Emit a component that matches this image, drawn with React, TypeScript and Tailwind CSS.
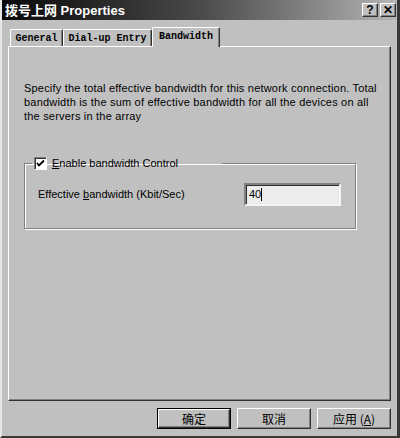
import React from "react";

const sans = "font-['Liberation_Sans','Noto_Sans_CJK_SC',sans-serif]";

function TitleBtn({ children }: { children: React.ReactNode }) {
  return (
    <div className="w-[16px] h-[14px] bg-[#c0c0c0] border-t border-l border-t-white border-l-white border-r border-b border-r-[#303030] border-b-[#303030] shadow-[inset_-1px_-1px_0_#808080] flex items-center justify-center text-black font-bold text-[12px] leading-none font-['Liberation_Sans',sans-serif]">
      {children}
    </div>
  );
}

function Tab({ label, selected, w }: { label: string; selected?: boolean; w: string }) {
  return (
    <div
      className={
        (selected
          ? "h-[20px] -mb-[1px] relative z-10 pb-[3px] "
          : "h-[17px] ") +
        w +
        " bg-[#c0c0c0] border-t border-l border-t-white border-l-white border-r border-r-[#303030] shadow-[inset_-1px_0_0_#808080] rounded-t-[2px] flex items-center justify-center text-[10px] font-bold text-black font-['Liberation_Mono',monospace] whitespace-nowrap"
      }
    >
      {label}
    </div>
  );
}

function Button({ children, def }: { children: React.ReactNode; def?: boolean }) {
  const inner =
    "h-full w-full bg-[#c0c0c0] border-t border-l border-t-white border-l-white border-r border-b border-r-[#303030] border-b-[#303030] shadow-[inset_-1px_-1px_0_#808080] flex items-center justify-center text-[12px] text-black font-['Noto_Sans_CJK_SC',sans-serif]";
  if (def) {
    return (
      <div className="w-[74px] h-[21px] border border-black">
        <div className={inner}>{children}</div>
      </div>
    );
  }
  return (
    <div className="w-[74px] h-[21px]">
      <div className={inner}>{children}</div>
    </div>
  );
}

export default function App() {
  return (
    <div className={"w-[400px] h-[438px] bg-[#c0c0c0] flex flex-col border-l-2 border-l-[#e6e6e6] border-r-[3px] border-r-[#383838] border-b-2 border-b-[#383838] overflow-hidden " + sans}>
      {/* Title bar */}
      <div className="h-[20px] shrink-0 flex items-center justify-between pl-[3px] pr-[1px] bg-linear-to-r from-[#0a0a0a] via-[#4a4a4a] to-[#b6b6b6]">
        <span className="text-white font-bold text-[13px] leading-none font-['Liberation_Sans','Noto_Sans_CJK_SC',sans-serif]">
          拨号上网 Properties
        </span>
        <div className="flex gap-[2px]">
          <TitleBtn>?</TitleBtn>
          <TitleBtn>✕</TitleBtn>
        </div>
      </div>

      {/* Tabs */}
      <div className="mt-[7px] h-[19px] shrink-0 pl-[8px] flex items-end">
        <Tab label="General" w="w-[53px]" />
        <Tab label="Dial-up Entry" w="w-[89px]" />
        <Tab label="Bandwidth" selected w="w-[68px]" />
      </div>

      {/* Panel */}
      <div className="h-[355px] shrink-0 mx-[6px] border-t border-l border-t-white border-l-white border-r border-b border-r-[#303030] border-b-[#303030] shadow-[inset_-1px_-1px_0_#808080] pl-[15px] pt-[34px]">
        <div className="text-[11px] leading-[14px] tracking-[0.2px] text-black whitespace-nowrap">
          Specify the total effective bandwidth for this network connection. Total
          <br />
          bandwidth is the sum of effective bandwidth for all the devices on all
          <br />
          the servers in the array
        </div>

        <fieldset className="mt-[33px] w-[332px] h-[73px] border border-[#808080] shadow-[inset_1px_1px_0_#ffffff,1px_1px_0_#ffffff]">
          <legend className="ml-[7px] p-0">
            <div className="w-[190px] h-[14px] flex items-center pl-[2px]">
              <div className="w-[13px] h-[13px] bg-white border-t border-l border-t-[#808080] border-l-[#808080] border-b border-r border-b-white border-r-white shadow-[inset_1px_1px_0_#303030] flex items-center justify-center">
                <svg width="9" height="9" viewBox="0 0 9 9">
                  <path d="M1 4 L3 6.5 L8 1.5" stroke="#000" strokeWidth="1.8" fill="none" />
                </svg>
              </div>
              <span className="ml-[5px] text-[11px] leading-none text-black">
                <span className="underline">E</span>nable bandwidth Control
              </span>
            </div>
          </legend>
          <div className="pt-[13px] pl-[13px] flex items-center">
            <span className="w-[206px] text-[11px] leading-none text-black">
              Effective <span className="underline">b</span>andwidth (Kbit/Sec)
            </span>
            <div className="w-[97px] h-[23px] bg-[#ececec] border-2 border-t-[#808080] border-l-[#808080] border-b-[#f4f4f4] border-r-[#f4f4f4] shadow-[inset_1px_1px_0_#303030] flex items-center pl-[3px]">
              <span className="text-[11px] leading-none text-black">40</span>
              <span className="w-[1px] h-[13px] bg-black" />
            </div>
          </div>
        </fieldset>
      </div>

      {/* Buttons */}
      <div className="mt-[7px] shrink-0 flex justify-end gap-[6px] pr-[6px]">
        <Button def>确定</Button>
        <Button>取消</Button>
        <Button>
          应用 (<span className="underline">A</span>)
        </Button>
      </div>
    </div>
  );
}
